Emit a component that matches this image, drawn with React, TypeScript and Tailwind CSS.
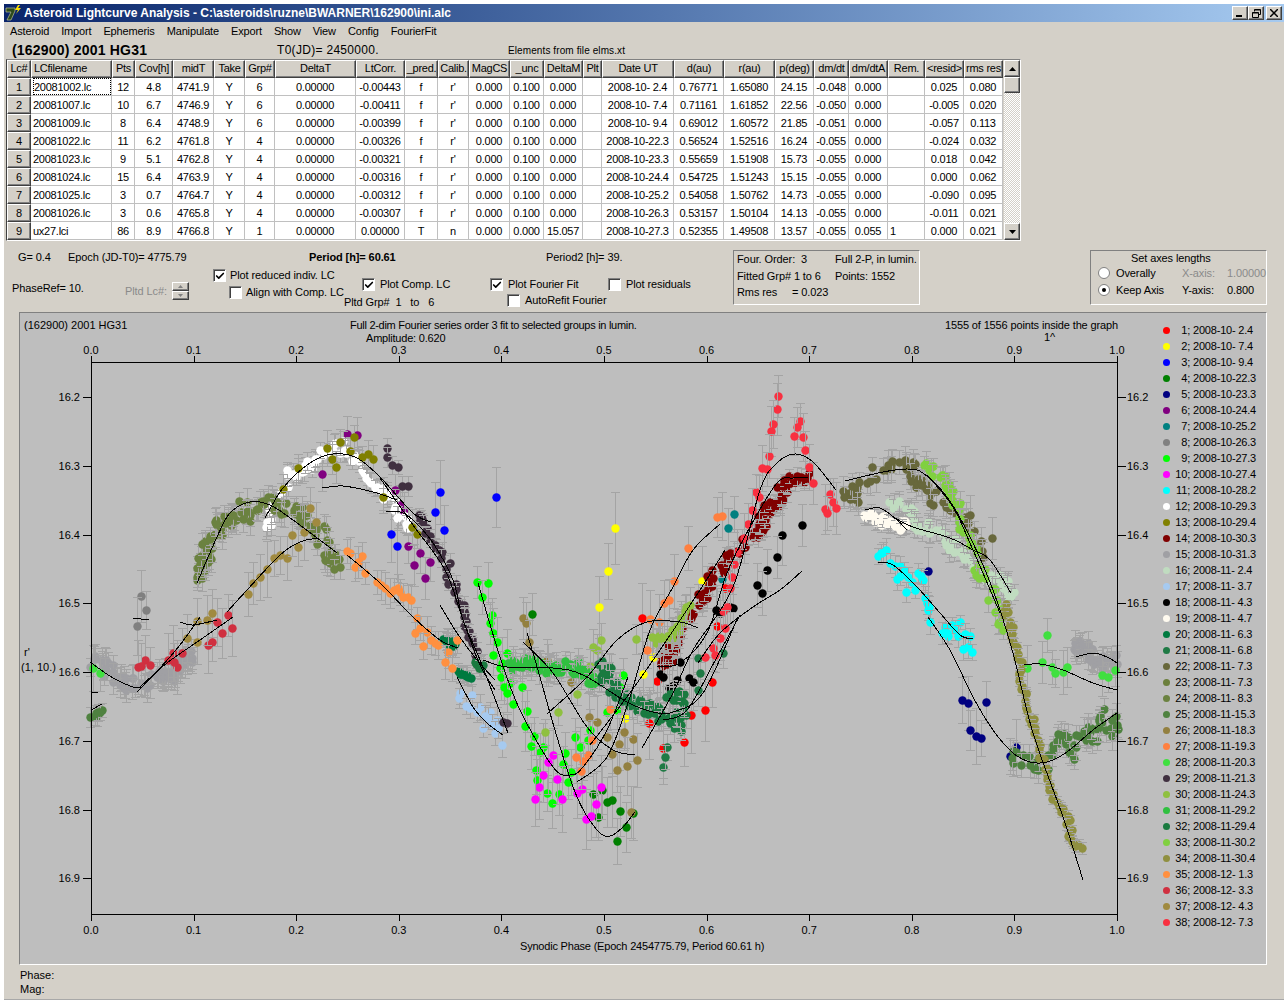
import { Check } from "lucide-react";

// legend colours, session index + 1
const COLORS = [
  "#ff0000", "#ffff00", "#0000ff", "#008000", "#000080", "#800080", "#008080", "#808080", "#00ff00", "#ff00ff",
  "#00ffff", "#ffffff", "#808000", "#800000", "#a0a0a4", "#c0dcc0", "#a6caf0", "#000000", "#fffbf0", "#007a40",
  "#1f7a45", "#68683c", "#6b7f3c", "#6b8240", "#4f8240", "#938040", "#ff8040", "#40e040", "#403040", "#8fc040",
  "#30c040", "#1a7a40", "#80d040", "#909040", "#ff9040", "#d03040", "#a08a40", "#f83040",
];
const DATES = [
  "2008-10- 2.4", "2008-10- 7.4", "2008-10- 9.4", "2008-10-22.3", "2008-10-23.3", "2008-10-24.4", "2008-10-25.2", "2008-10-26.3",
  "2008-10-27.3", "2008-10-27.4", "2008-10-28.2", "2008-10-29.3", "2008-10-29.4", "2008-10-30.3", "2008-10-31.3", "2008-11- 2.4",
  "2008-11- 3.7", "2008-11- 4.3", "2008-11- 4.7", "2008-11- 6.3", "2008-11- 6.8", "2008-11- 7.3", "2008-11- 7.3", "2008-11- 8.3",
  "2008-11-15.3", "2008-11-18.3", "2008-11-19.3", "2008-11-20.3", "2008-11-21.3", "2008-11-24.3", "2008-11-29.2", "2008-11-29.4",
  "2008-11-30.2", "2008-11-30.4", "2008-12- 1.3", "2008-12- 3.3", "2008-12- 4.3", "2008-12- 7.3",
];

type Pt = [number, number];
interface Session {
  c: number;
  pts: Pt[];
  err: number;
  n?: number;
  j?: number;
}

// points are in page pixels, the svg viewBox uses the same numbers
const SESSIONS: Session[] = [
  { c: 1, err: 30, pts: [[642, 618], [657, 681], [712, 682], [725, 588], [717, 626], [649, 723], [691, 715], [705, 710], [684, 742], [663, 748]] },
  { c: 2, err: 30, pts: [[615, 528], [608, 571], [599, 607], [702, 581], [653, 657], [643, 674], [625, 718]] },
  { c: 3, err: 28, pts: [[440, 492], [435, 512], [444, 530], [391, 534], [397, 546], [496, 497]] },
  { c: 4, err: 24, pts: [[532, 614], [593, 794], [602, 790], [607, 802], [612, 800], [620, 811], [626, 827], [617, 841], [598, 817], [633, 813]] },
  { c: 5, err: 22, pts: [[928, 571], [962, 700], [968, 703], [986, 702], [970, 730], [976, 736], [981, 738], [1016, 747], [1010, 756]] },
  { c: 6, err: 18, pts: [[347, 434], [357, 435], [322, 474], [395, 490], [400, 505], [404, 512], [408, 546], [420, 553], [414, 565], [430, 562], [425, 578]] },
  { c: 7, err: 20, pts: [[734, 514], [728, 528], [722, 579]] },
  { c: 8, err: 24, pts: [[141, 596], [146, 610], [137, 626]] },
  { c: 9, err: 20, pts: [[477, 582], [488, 583], [482, 597], [492, 615], [490, 623], [493, 633], [497, 642], [493, 655], [507, 653], [502, 663], [500, 668], [501, 677], [510, 683], [504, 687], [507, 693], [522, 687], [513, 704], [527, 711], [525, 726], [534, 736], [531, 746], [543, 747], [540, 752], [536, 770], [565, 753], [563, 764], [575, 737], [580, 747], [588, 740], [571, 772], [568, 782], [552, 803], [547, 793], [559, 794], [537, 780], [623, 675], [620, 687], [607, 712], [617, 710], [590, 730]] },
  { c: 10, err: 26, pts: [[553, 755], [548, 762], [543, 775], [557, 779], [539, 787], [535, 799], [562, 799], [577, 793], [582, 789], [601, 787], [596, 804], [586, 819], [591, 816]] },
  { c: 11, err: 9, pts: [[883, 552], [878, 556], [886, 550], [881, 553], [890, 563], [895, 566], [900, 566], [904, 570], [897, 579], [900, 576], [908, 577], [912, 582], [918, 573], [923, 580], [921, 576], [915, 590], [906, 592], [927, 603], [925, 598], [929, 607], [928, 610], [930, 622], [945, 627], [942, 633], [948, 636], [960, 622], [955, 630], [952, 625], [958, 636], [970, 636], [965, 634], [963, 649], [968, 647], [972, 652], [947, 633]] },
  { c: 12, err: 9, n: 70, j: 5, pts: [[265, 528], [272, 510], [288, 475], [307, 468], [320, 453], [338, 444], [357, 460], [373, 480], [385, 495], [400, 515], [408, 527]] },
  { c: 13, err: 14, pts: [[283, 489], [298, 468], [327, 448], [332, 459], [336, 467], [340, 442], [350, 451], [354, 437], [362, 457], [368, 454], [373, 459], [383, 497], [412, 527], [417, 534]] },
  { c: 14, err: 8, n: 110, j: 6, pts: [[665, 664], [670, 654], [673, 642], [698, 603], [705, 593], [715, 573], [727, 562], [753, 533], [762, 528], [762, 517], [765, 507], [780, 502], [782, 487], [793, 480], [807, 475]] },
  { c: 15, err: 11, n: 70, j: 7, pts: [[93, 660], [108, 665], [118, 682], [140, 684], [160, 678], [172, 675], [185, 660], [193, 655]] },
  { c: 15, err: 10, n: 36, j: 6, pts: [[1075, 650], [1082, 645], [1092, 660], [1105, 665], [1117, 655]] },
  { c: 16, err: 9, n: 70, j: 6, pts: [[890, 503], [908, 507], [917, 523], [933, 530], [948, 540], [958, 550], [973, 558], [977, 572], [997, 577], [1007, 583], [1012, 594]] },
  { c: 17, err: 10, pts: [[460, 693], [459, 698], [472, 695], [470, 708], [466, 706], [480, 707], [490, 712], [488, 718], [483, 728], [497, 720], [492, 724], [495, 733], [498, 728], [502, 745], [477, 712], [485, 716]] },
  { c: 18, err: 24, pts: [[802, 525], [782, 535], [777, 557], [767, 570], [757, 585], [762, 593], [733, 608], [716, 610], [720, 613], [730, 607], [680, 662], [660, 674], [663, 677], [672, 686], [669, 688], [677, 680], [689, 678], [693, 682]] },
  { c: 19, err: 7, n: 34, j: 5, pts: [[867, 512], [880, 520], [900, 522], [905, 527]] },
  { c: 20, err: 10, n: 10, j: 3, pts: [[445, 640], [452, 645]] },
  { c: 20, err: 8, n: 8, j: 1, pts: [[458, 672], [470, 678]] },
  { c: 21, err: 14, pts: [[663, 767], [667, 747], [665, 757], [698, 690], [723, 653], [698, 658], [700, 673]] },
  { c: 22, err: 12, n: 62, j: 6, pts: [[847, 493], [853, 500], [863, 480], [883, 468], [900, 463], [913, 468], [918, 483], [925, 490], [937, 500], [957, 517], [970, 525], [987, 553]] },
  { c: 22, err: 20, pts: [[970, 515], [992, 538]] },
  { c: 24, err: 11, n: 105, j: 6, pts: [[198, 582], [200, 562], [208, 558], [203, 545], [215, 538], [217, 523], [223, 517], [232, 525], [243, 503], [250, 517], [263, 498], [277, 507], [293, 512], [302, 510], [310, 530], [322, 533], [327, 555], [335, 558], [337, 568]] },
  { c: 25, err: 11, n: 60, j: 7, pts: [[1012, 755], [1027, 762], [1040, 767], [1053, 745], [1063, 740], [1072, 753], [1085, 727], [1093, 742], [1102, 713], [1107, 730], [1117, 722]] },
  { c: 25, err: 8, n: 8, j: 2, pts: [[92, 717], [102, 710]] },
  { c: 26, err: 22, pts: [[523, 618], [526, 623], [529, 642], [547, 660], [548, 665], [571, 682], [589, 717], [597, 722], [607, 737], [619, 744], [633, 739], [612, 754], [624, 732], [637, 760], [627, 766], [617, 770], [631, 812]] },
  { c: 27, err: 22, pts: [[717, 517], [722, 516], [688, 548], [674, 581], [669, 600], [664, 603], [650, 619], [659, 622], [647, 650], [576, 757], [583, 761], [588, 755], [581, 771], [592, 740], [610, 709]] },
  { c: 28, err: 18, pts: [[93, 668], [100, 673], [1102, 675], [1108, 677], [1115, 670], [1027, 668], [1042, 662], [1047, 635], [1052, 667], [1055, 673], [1063, 672], [1067, 667]] },
  { c: 29, err: 9, pts: [[387, 448], [387, 457], [392, 465], [398, 467], [402, 486], [408, 486], [420, 520], [430, 540], [436, 548], [442, 552], [450, 563], [503, 722], [507, 723]] },
  { c: 29, err: 7, n: 34, j: 3, pts: [[418, 515], [430, 535], [452, 583], [463, 610], [468, 633], [478, 658]] },
  { c: 30, err: 14, pts: [[593, 647], [601, 640], [597, 650], [636, 639], [545, 732], [558, 712], [577, 694], [590, 666]] },
  { c: 30, err: 14, n: 24, j: 4, pts: [[652, 640], [665, 638], [678, 630], [690, 607]] },
  { c: 31, err: 11, n: 62, j: 6, pts: [[510, 665], [530, 663], [553, 668], [573, 667], [597, 683]] },
  { c: 32, err: 9, n: 10, j: 3, pts: [[474, 664], [482, 666]] },
  { c: 32, err: 11, n: 75, j: 6, pts: [[603, 663], [607, 677], [617, 693], [633, 703], [647, 707], [660, 713], [677, 727], [683, 697], [668, 695]] },
  { c: 33, err: 10, n: 50, j: 5, pts: [[928, 462], [937, 475], [945, 482], [953, 497], [960, 517], [967, 537], [977, 567], [987, 580], [997, 610], [1002, 632]] },
  { c: 34, err: 5, n: 70, j: 3, pts: [[1003, 605], [1007, 618], [1013, 637], [1017, 652], [1020, 670], [1023, 687], [1028, 705], [1032, 722], [1037, 737], [1040, 753], [1045, 770], [1050, 790], [1057, 803], [1064, 813], [1072, 830], [1070, 840], [1080, 848]] },
  { c: 35, err: 13, pts: [[347, 551], [350, 553], [362, 556], [355, 567], [358, 562], [365, 573], [377, 582], [381, 585], [385, 588], [390, 593], [394, 590], [398, 588], [400, 592], [403, 597], [408, 597], [411, 600], [417, 618], [415, 633], [420, 628], [427, 632], [435, 643], [431, 640], [438, 645], [457, 640], [448, 652], [445, 662], [452, 668], [423, 646]] },
  { c: 36, err: 22, pts: [[138, 667], [145, 660], [141, 666], [150, 665], [168, 660], [173, 653], [182, 653], [177, 667], [174, 662], [212, 642], [208, 645], [217, 622], [228, 615], [222, 633], [232, 628]] },
  { c: 37, err: 22, pts: [[187, 638], [197, 621], [207, 620], [212, 613], [197, 642], [248, 594], [253, 583], [260, 577], [267, 569], [274, 558], [280, 555], [287, 558], [298, 547], [292, 535], [304, 532], [310, 508], [316, 522]] },
  { c: 38, err: 20, pts: [[778, 396], [777, 409], [773, 424], [771, 431], [769, 456], [762, 468], [767, 469], [756, 492], [759, 497], [752, 510], [748, 524], [744, 538], [737, 552], [734, 564], [732, 577], [730, 588], [727, 607], [723, 611], [725, 628], [720, 638], [713, 648], [705, 657], [715, 655], [800, 421], [797, 427], [794, 436], [803, 437], [805, 450], [809, 467], [813, 483], [830, 494], [833, 502], [836, 508], [825, 509], [827, 513]] },
];

const CURVES: Pt[][] = [
  [[90, 662], [113, 678], [133, 687], [142, 687]],
  [[137, 692], [160, 668], [180, 645], [200, 617]],
  [[140, 687], [167, 663], [200, 640], [233, 617]],
  [[133, 618], [149, 620]],
  [[180, 622], [193, 625], [217, 620]],
  [[227, 612], [247, 590], [280, 555], [300, 542], [318, 538]],
  [[197, 583], [217, 537], [230, 513], [250, 502], [270, 505], [293, 520], [337, 553]],
  [[265, 518], [283, 488], [310, 463], [333, 454], [357, 458], [380, 477], [413, 513], [431, 522]],
  [[322, 488], [343, 486], [373, 492], [397, 500]],
  [[386, 512], [400, 512], [413, 520], [433, 543], [453, 580], [463, 620], [480, 660], [508, 733]],
  [[380, 478], [413, 525], [445, 570], [463, 620], [480, 665], [495, 690]],
  [[440, 605], [457, 633], [477, 660], [495, 680]],
  [[457, 677], [473, 707], [487, 723], [503, 735]],
  [[347, 555], [380, 583], [413, 617], [440, 640], [458, 648]],
  [[478, 583], [500, 657], [520, 710], [553, 767], [570, 775], [583, 767], [607, 730], [628, 677]],
  [[527, 633], [538, 670], [557, 737], [577, 797], [597, 830], [610, 836], [623, 827], [635, 812]],
  [[523, 642], [553, 673], [587, 727], [613, 750], [635, 755]],
  [[483, 660], [507, 667], [553, 668], [583, 675], [627, 702], [653, 712], [673, 712], [703, 693], [738, 617]],
  [[547, 714], [587, 677], [617, 640], [647, 622], [680, 622], [698, 628]],
  [[577, 782], [607, 757], [630, 697], [650, 630], [673, 587], [693, 550], [720, 524]],
  [[590, 745], [627, 697], [660, 650], [700, 590], [725, 550]],
  [[642, 748], [673, 693], [693, 650], [733, 587], [760, 490], [777, 463], [795, 454], [813, 462], [836, 490]],
  [[657, 667], [680, 663], [707, 633], [727, 573], [750, 527], [777, 483], [793, 478], [808, 478]],
  [[698, 663], [720, 633], [753, 607], [780, 590], [802, 571]],
  [[663, 720], [687, 710], [717, 657], [740, 615]],
  [[845, 481], [883, 472], [907, 469], [923, 473], [947, 497], [970, 537], [993, 590], [1013, 653], [1033, 733], [1063, 817], [1083, 880]],
  [[927, 475], [953, 507], [973, 550], [1000, 613]],
  [[865, 510], [880, 508], [897, 520], [907, 530]],
  [[893, 517], [913, 527], [950, 538], [973, 550], [990, 560], [1011, 593]],
  [[878, 562], [893, 565], [917, 587], [940, 613], [960, 635], [973, 639]],
  [[928, 617], [950, 650], [973, 697], [993, 730], [1013, 753], [1030, 762], [1047, 762], [1067, 752], [1093, 730], [1117, 713]],
  [[1024, 665], [1040, 664], [1063, 670], [1093, 683], [1117, 690]],
  [[1076, 657], [1093, 653], [1107, 657], [1117, 663]],
  [[91, 692], [98, 693]],
  [[91, 710], [102, 704]],
];

const rand = (() => {
  let s = 162900;
  return () => {
    s = (s + 0x6d2b79f5) | 0;
    let t = Math.imul(s ^ (s >>> 15), 1 | s);
    t = (t + Math.imul(t ^ (t >>> 7), 61 | t)) ^ t;
    return ((t ^ (t >>> 14)) >>> 0) / 4294967296;
  };
})();

function spread(s: Session): Pt[] {
  if (!s.n) return s.pts;
  const out: Pt[] = [];
  const segs = s.pts.length - 1;
  for (let i = 0; i < s.n; i++) {
    const t = (i / (s.n - 1)) * segs;
    const k = Math.min(Math.floor(t), segs - 1);
    const f = t - k;
    const x = s.pts[k][0] + (s.pts[k + 1][0] - s.pts[k][0]) * f + (rand() - 0.5) * 2 * (s.j ?? 0);
    const y = s.pts[k][1] + (s.pts[k + 1][1] - s.pts[k][1]) * f + (rand() - 0.5) * 2 * (s.j ?? 0);
    out.push([Math.round(x), Math.round(y)]);
  }
  return out;
}

function smooth(p: Pt[]): string {
  let d = `M${p[0][0]} ${p[0][1]}`;
  for (let i = 0; i < p.length - 1; i++) {
    const a = p[Math.max(i - 1, 0)];
    const b = p[i];
    const c = p[i + 1];
    const e = p[Math.min(i + 2, p.length - 1)];
    d += ` C${b[0] + (c[0] - a[0]) / 6} ${b[1] + (c[1] - a[1]) / 6} ${c[0] - (e[0] - b[0]) / 6} ${c[1] - (e[1] - b[1]) / 6} ${c[0]} ${c[1]}`;
  }
  return d;
}

const COLS = [
  "Lc#", "LCfilename", "Pts", "Cov[h]", "midT", "Take", "Grp#", "DeltaT", "LtCorr.", "_pred.", "Calib.", "MagCS", "_unc", "DeltaM", "Plt",
  "Date UT", "d(au)", "r(au)", "p(deg)", "dm/dt", "dm/dtA", "Rem.", "<resid>", "rms res",
];
const ROWS: string[][] = [
  ["1", "20081002.lc", "12", "4.8", "4741.9", "Y", "6", "0.00000", "-0.00443", "f", "r'", "0.000", "0.100", "0.000", "", "2008-10- 2.4", "0.76771", "1.65080", "24.15", "-0.048", "0.000", "", "0.025", "0.080"],
  ["2", "20081007.lc", "10", "6.7", "4746.9", "Y", "6", "0.00000", "-0.00411", "f", "r'", "0.000", "0.100", "0.000", "", "2008-10- 7.4", "0.71161", "1.61852", "22.56", "-0.050", "0.000", "", "-0.005", "0.020"],
  ["3", "20081009.lc", "8", "6.4", "4748.9", "Y", "6", "0.00000", "-0.00399", "f", "r'", "0.000", "0.100", "0.000", "", "2008-10- 9.4", "0.69012", "1.60572", "21.85", "-0.051", "0.000", "", "-0.057", "0.113"],
  ["4", "20081022.lc", "11", "6.2", "4761.8", "Y", "4", "0.00000", "-0.00326", "f", "r'", "0.000", "0.100", "0.000", "", "2008-10-22.3", "0.56524", "1.52516", "16.24", "-0.055", "0.000", "", "-0.024", "0.032"],
  ["5", "20081023.lc", "9", "5.1", "4762.8", "Y", "4", "0.00000", "-0.00321", "f", "r'", "0.000", "0.100", "0.000", "", "2008-10-23.3", "0.55659", "1.51908", "15.73", "-0.055", "0.000", "", "0.018", "0.042"],
  ["6", "20081024.lc", "15", "6.4", "4763.9", "Y", "4", "0.00000", "-0.00316", "f", "r'", "0.000", "0.100", "0.000", "", "2008-10-24.4", "0.54725", "1.51243", "15.15", "-0.055", "0.000", "", "0.000", "0.062"],
  ["7", "20081025.lc", "3", "0.7", "4764.7", "Y", "4", "0.00000", "-0.00312", "f", "r'", "0.000", "0.100", "0.000", "", "2008-10-25.2", "0.54058", "1.50762", "14.73", "-0.055", "0.000", "", "-0.090", "0.095"],
  ["8", "20081026.lc", "3", "0.6", "4765.8", "Y", "4", "0.00000", "-0.00307", "f", "r'", "0.000", "0.100", "0.000", "", "2008-10-26.3", "0.53157", "1.50104", "14.13", "-0.055", "0.000", "", "-0.011", "0.021"],
  ["9", "ux27.lci", "86", "8.9", "4766.8", "Y", "1", "0.00000", "0.00000", "T", "n", "0.000", "0.000", "15.057", "", "2008-10-27.3", "0.52355", "1.49508", "13.57", "-0.055", "0.055", "1", "0.000", "0.021"],
];

const bevel = "border-t border-l border-t-white border-l-white border-r border-b border-r-[#404040] border-b-[#404040] shadow-[inset_-1px_-1px_0_#808080]";

function CheckBox({ checked }: { checked?: boolean }) {
  return (
    <span className="flex h-[13px] w-[13px] shrink-0 items-center justify-center border border-t-[#808080] border-l-[#808080] border-r-white border-b-white bg-white shadow-[inset_1px_1px_0_#404040]">
      {checked && <Check className="h-[10px] w-[10px] text-black" strokeWidth={4} />}
    </span>
  );
}

function Radio({ on }: { on?: boolean }) {
  return (
    <svg width="12" height="12" viewBox="0 0 12 12" className="shrink-0">
      <circle cx="6" cy="6" r="5.5" fill="#ffffff" stroke="#808080" />
      {on && <circle cx="6" cy="6" r="2" fill="#000000" />}
    </svg>
  );
}

function Cell({ r, c, v }: { r: number; c: number; v: string }) {
  if (c === 0)
    return <div className={`flex items-center justify-center bg-[#d4d0c8] pt-[1px] ${bevel}`}>{v}</div>;
  const focus = r === 0 && c === 1;
  const left = c === 1 || c === 21;
  return (
    <div className={`flex items-center overflow-hidden whitespace-pre border-r border-b border-[#c0c0c0] bg-white ${focus ? "" : "pt-[1px]"} ${left ? "justify-start pl-[2px]" : "justify-center"}`}>
      <span className={focus ? "flex h-full w-full items-center border border-dotted border-black pt-[1px]" : ""}>{v}</span>
    </div>
  );
}

function DataTable() {
  return (
    <div className="ml-[2px] flex w-[1015px] border border-t-[#808080] border-l-[#404040] border-r-white border-b-white tracking-[-0.25px]">
      <div className="grid h-[180px] grid-cols-[24px_81px_23px_38px_41px_31px_30px_81px_49px_33px_31px_41px_34px_39px_19px_72px_50px_51px_39px_35px_39px_37px_39px_39px] grid-rows-[18px] auto-rows-[18px]">
        {COLS.map((h, i) => (
          <div key={h} className={`flex items-center overflow-hidden whitespace-pre bg-[#d4d0c8] pb-[1px] ${i === 1 ? "justify-start pl-[2px]" : "justify-center"} ${bevel}`}>{h}</div>
        ))}
        {ROWS.map((row, r) => row.map((v, c) => <Cell key={`${r}-${c}`} r={r} c={c} v={v} />))}
      </div>
      <div className="ml-[1px] flex w-[16px] flex-col">
        <div className={`flex h-[17px] items-center justify-center bg-[#d4d0c8] ${bevel}`}>
          <svg width="7" height="4" viewBox="0 0 7 4"><path d="M3.5 0 7 4H0z" fill="#000" /></svg>
        </div>
        <div className={`h-[16px] bg-[#d4d0c8] ${bevel}`} />
        <div className="flex-1 bg-[repeating-conic-gradient(#ffffff_0_25%,#d4d0c8_0_50%)] bg-[length:2px_2px]" />
        <div className={`flex h-[17px] items-center justify-center bg-[#d4d0c8] ${bevel}`}>
          <svg width="7" height="4" viewBox="0 0 7 4"><path d="M0 0h7L3.5 4z" fill="#000" /></svg>
        </div>
      </div>
    </div>
  );
}

function Controls() {
  return (
    <div className="flex h-[71px] tracking-[-0.1px]">
      <div className="w-[729px]">
        <div className="flex h-[25px] items-end whitespace-pre pb-[1px]">
          <span className="ml-[14px] w-[50px]">G= 0.4</span>
          <span className="w-[241px]">Epoch (JD-T0)= 4775.79</span>
          <span className="w-[237px] font-bold">Period [h]= 60.61</span>
          <span>Period2 [h]= 39.</span>
        </div>
        <div className="flex h-[46px]">
          <div className="w-[121px] pl-[8px] pt-[14px]">PhaseRef= 10.</div>
          <div className="flex w-[88px] items-start pt-[16px]">
            <span className="mt-[1px] w-[47px] whitespace-pre text-[#8a8a8a]">Pltd Lc#:</span>
            <div className="flex h-[18px] w-[17px] flex-col">
              <div className={`flex flex-1 items-center justify-center bg-[#d4d0c8] ${bevel}`}>
                <svg width="5" height="3" viewBox="0 0 5 3"><path d="M2.5 0 5 3H0z" fill="#808080" /></svg>
              </div>
              <div className={`flex flex-1 items-center justify-center bg-[#d4d0c8] ${bevel}`}>
                <svg width="5" height="3" viewBox="0 0 5 3"><path d="M0 0h5L2.5 3z" fill="#808080" /></svg>
              </div>
            </div>
          </div>
          <div className="w-[131px] pt-[2px]">
            <label className="flex h-[15px] items-center gap-[4px] whitespace-pre"><CheckBox checked />Plot reduced indiv. LC</label>
            <label className="ml-[16px] mt-[2px] flex h-[15px] items-center gap-[4px] whitespace-pre"><CheckBox />Align with Comp. LC</label>
          </div>
          <div className="w-[146px] pt-[11px]">
            <label className="ml-[18px] flex h-[15px] items-center gap-[5px] whitespace-pre"><CheckBox checked />Plot Comp. LC</label>
            <div className="mt-[2px] whitespace-pre">Pltd Grp#  1   to   6</div>
          </div>
          <div className="w-[118px] pt-[11px]">
            <label className="flex h-[15px] items-center gap-[5px] whitespace-pre"><CheckBox checked />Plot Fourier Fit</label>
            <label className="ml-[17px] mt-[1px] flex h-[15px] items-center gap-[5px] whitespace-pre"><CheckBox />AutoRefit Fourier</label>
          </div>
          <div className="w-[125px] pt-[11px]">
            <label className="flex h-[15px] items-center gap-[5px] whitespace-pre"><CheckBox />Plot residuals</label>
          </div>
        </div>
      </div>
      <div className="mt-[9px] h-[55px] w-[187px] border border-t-[#808080] border-l-[#808080] border-r-white border-b-white pl-[3px] leading-[16.5px] whitespace-pre">
        <div className="flex"><span className="w-[98px]">Four. Order:  3</span><span>Full 2-P, in lumin.</span></div>
        <div className="flex"><span className="w-[98px]">Fitted Grp# 1 to 6</span><span>Points: 1552</span></div>
        <div>Rms res     = 0.023</div>
      </div>
      <div className="ml-[170px] mt-[9px] h-[55px] w-[177px] border border-t-[#808080] border-l-[#808080] border-r-white border-b-white whitespace-pre">
        <div className="pl-[40px] leading-[14px]">Set axes lengths</div>
        <div className="flex h-[16px] items-center pl-[7px]">
          <Radio /><span className="ml-[6px] w-[66px]">Overally</span>
          <span className="w-[45px] text-[#8a8a8a]">X-axis:</span><span className="text-[#8a8a8a]">1.00000</span>
        </div>
        <div className="mt-[1px] flex h-[16px] items-center pl-[7px]">
          <Radio on /><span className="ml-[6px] w-[66px]">Keep Axis</span>
          <span className="w-[45px]">Y-axis:</span><span>0.800</span>
        </div>
      </div>
    </div>
  );
}

function Chart() {
  const xTicks = Array.from({ length: 11 }, (_, i) => i / 10);
  const yTicks = [
    ["16.2", 397], ["16.3", 466], ["16.4", 535], ["16.5", 603], ["16.6", 672], ["16.7", 741], ["16.8", 810], ["16.9", 878],
  ] as [string, number][];
  return (
    <svg width="1139" height="651" viewBox="20 313 1139 651" className="shrink-0 text-[11px]">
      <g shapeRendering="crispEdges">
        {SESSIONS.map((s, si) => (
          <g key={si}>
            {spread(s).map(([x, y], i) => {
              const e = Math.round(s.err * (0.8 + rand() * 0.5));
              return (
                <g key={i}>
                  <path d={`M${x}.5 ${y - e}V${y + e}M${x - 4} ${y - e}.5H${x + 5}M${x - 4} ${y + e}.5H${x + 5}`} stroke="#a4a4a4" fill="none" />
                  <circle cx={x + 0.5} cy={y + 0.5} r="4.2" fill={COLORS[s.c - 1]} shapeRendering="auto" />
                </g>
              );
            })}
          </g>
        ))}
        {CURVES.map((p, i) => <path key={i} d={smooth(p)} fill="none" stroke="#000000" />)}
        <rect x="91.5" y="362.5" width="1026" height="552" fill="none" stroke="#000000" />
        {xTicks.map((t) => {
          const x = Math.round(91 + t * 1026) + 0.5;
          return <path key={t} d={`M${x} 356V362M${x} 915V921`} stroke="#000000" />;
        })}
        {yTicks.map(([, y]) => <path key={y} d={`M83 ${y}.5H91M1118 ${y}.5H1126`} stroke="#000000" />)}
      </g>
      {xTicks.map((t) => (
        <g key={t} textAnchor="middle">
          <text x={91 + t * 1026} y="354">{t.toFixed(1)}</text>
          <text x={91 + t * 1026} y="934">{t.toFixed(1)}</text>
        </g>
      ))}
      {yTicks.map(([l, y]) => (
        <g key={l}>
          <text x="80" y={y + 4} textAnchor="end">{l}</text>
          <text x="1127" y={y + 4}>{l}</text>
        </g>
      ))}
      <text x="24" y="329">(162900) 2001 HG31</text>
      <text x="350" y="329" className="tracking-[-0.28px]">Full 2-dim Fourier series order 3 fit to selected groups in lumin.</text>
      <text x="366" y="342" className="tracking-[-0.2px]">Amplitude: 0.620</text>
      <text x="945" y="329" className="tracking-[-0.14px]">1555 of 1556 points inside the graph</text>
      <text x="1044" y="341">1^</text>
      <text x="24" y="656">r'</text>
      <text x="21" y="671">(1, 10.)</text>
      <text x="520" y="950" className="tracking-[-0.2px]">Synodic Phase (Epoch 2454775.79, Period 60.61 h)</text>
    </svg>
  );
}

function Legend() {
  return (
    <div className="pt-[9px] whitespace-pre tracking-[-0.2px]">
      {DATES.map((d, i) => (
        <div key={i} className="flex h-[16px] items-center">
          <span className="ml-[4px] h-[7px] w-[7px] rounded-full" style={{ backgroundColor: COLORS[i] }} />
          <span className="w-[20px] text-right">{i + 1};</span>
          <span className="ml-[3px]">{d}</span>
        </div>
      ))}
    </div>
  );
}

export default function App() {
  return (
    <div className="h-[1002px] w-[1288px] bg-white p-[4px] pb-0 font-['Liberation_Sans',Arial,sans-serif] text-[11px] text-black">
      <div className="h-[996px] w-[1280px] border-b border-b-[#a8a8a8] bg-[#d4d0c8]">
        {/* Title bar */}
        <div className="flex h-[18px] items-center bg-linear-to-r from-[#0a246a] to-[#a6caf0] pr-[2px]">
          <svg width="16" height="16" viewBox="0 0 16 16" className="ml-[1px] shrink-0">
            <path d="M1 3h9v3L6 15H2l4-8H1z" fill="#2d4a1c" stroke="#d8d8a0" strokeWidth="0.6" />
            <path d="M13 0 10 5h3l-2 4 5-6h-3l2-3z" fill="#ffe000" />
          </svg>
          <span className="ml-[3px] flex-1 whitespace-pre text-[12px] font-bold text-white">Asteroid Lightcurve Analysis - C:\asteroids\ruzne\BWARNER\162900\ini.alc</span>
          <div className={`flex h-[14px] w-[16px] items-center justify-center bg-[#d4d0c8] ${bevel}`}>
            <svg width="8" height="8" viewBox="0 0 8 8"><path d="M0 6h6v2H0z" /></svg>
          </div>
          <div className={`flex h-[14px] w-[16px] items-center justify-center bg-[#d4d0c8] ${bevel}`}>
            <svg width="9" height="9" viewBox="0 0 9 9" fill="none" stroke="#000"><path d="M2.5 2.5V.5h6v5h-2M.5 3.5h6v5h-6z" /><path d="M2.5 1h6M.5 4h6" /></svg>
          </div>
          <div className={`ml-[2px] flex h-[14px] w-[16px] items-center justify-center bg-[#d4d0c8] ${bevel}`}>
            <svg width="8" height="8" viewBox="0 0 8 8" stroke="#000" strokeWidth="1.5"><path d="M0 0l8 8M8 0 0 8" /></svg>
          </div>
        </div>
        {/* Menu */}
        <div className="flex h-[19px] items-center gap-[12px] pl-[6px] tracking-[-0.15px]">
          {["Asteroid", "Import", "Ephemeris", "Manipulate", "Export", "Show", "View", "Config", "FourierFit"].map((m) => (
            <span key={m}>{m}</span>
          ))}
        </div>
        {/* Asteroid line */}
        <div className="flex h-[18px] items-center whitespace-pre">
          <span className="ml-[8px] w-[265px] text-[14px] font-bold tracking-[0.2px]">(162900) 2001 HG31</span>
          <span className="w-[231px] text-[12px] tracking-[0.3px]">T0(JD)= 2450000.</span>
          <span className="text-[10px] tracking-[0.1px]">Elements from file elms.xt</span>
        </div>
        <DataTable />
        <Controls />
        {/* Graph panel */}
        <div className="ml-[15px] flex h-[653px] w-[1248px] border border-t-[#808080] border-l-[#808080] border-r-white border-b-white bg-[#bebebe]">
          <Chart />
          <Legend />
        </div>
        <div className="pl-[16px] pt-[3px] leading-[14px]">
          <div>Phase:</div>
          <div>Mag:</div>
        </div>
      </div>
    </div>
  );
}
